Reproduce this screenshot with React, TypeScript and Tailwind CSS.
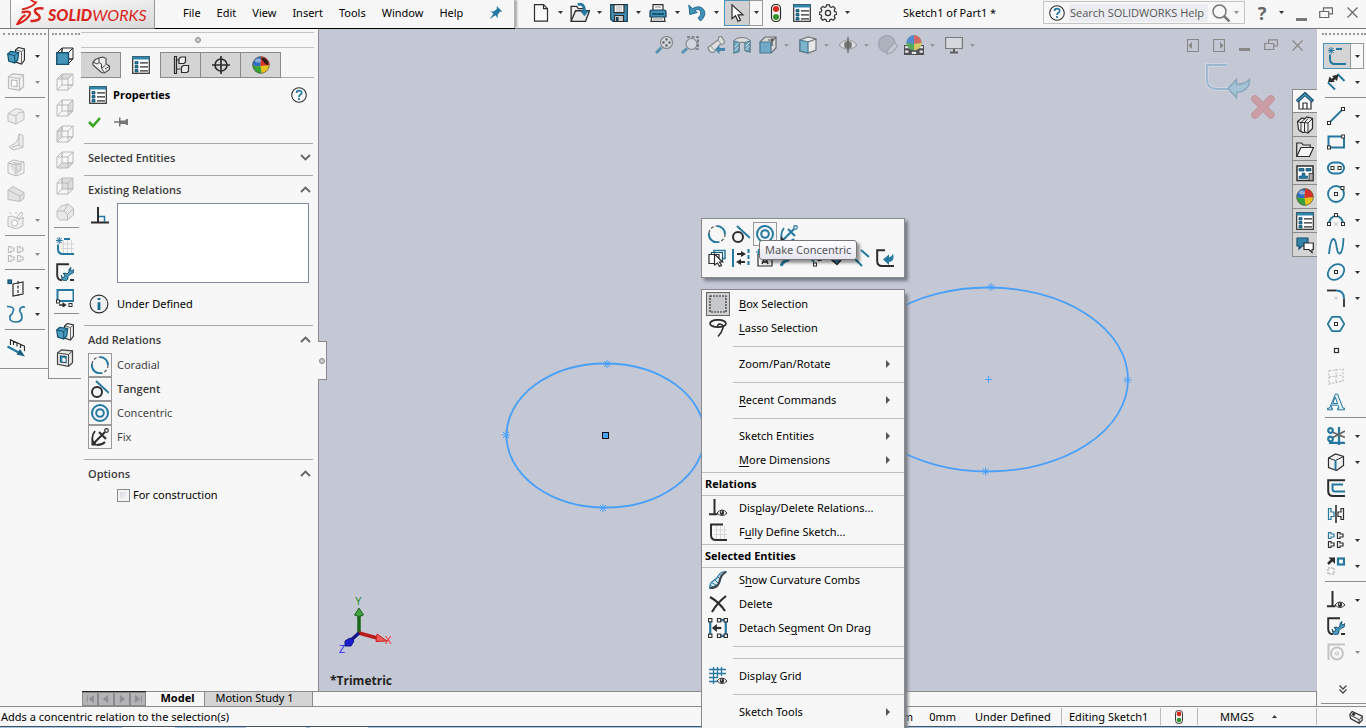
import type { ReactNode } from "react";

const B = "#2578a0";
const K = "#2d2d2d";
const G = "#bdbdbd";

function Ic({ children, cls = "h-[18px] w-[18px]", box = "0 0 18 18" }: { children: ReactNode; cls?: string; box?: string }) {
  return (
    <svg viewBox={box} className={"block shrink-0 " + cls} fill="none" stroke={K} strokeWidth="1.2" aria-hidden="true">
      {children}
    </svg>
  );
}

const Caret = ({ dim = false }: { dim?: boolean }) => (
  <svg viewBox="0 0 5 3" className="h-[3px] w-[5px] shrink-0" aria-hidden="true">
    <path d="M0 0h5L2.5 3z" fill={dim ? "#8c8c8c" : "#333"} />
  </svg>
);

const handle = (x: number, y: number, c = K) => <rect key={`${x}-${y}`} x={x - 1.5} y={y - 1.5} width="3" height="3" fill="#fff" stroke={c} strokeWidth="1" />;

/* ---------- feature icons ---------- */
const Extrude = () => (
  <Ic>
    <path d="M8.5 3l3-2.500 6 1.500v11l-3 4-6-2z" fill="#f2f2f2" />
    <path d="M14.500 4.500v12M14.500 4.500l3-2.500M14.500 4.500L9 3" stroke="#666" strokeWidth="1" />
    <path d="M.7 7l3-2.500 8 1-1 7.500-3 3-6-2z" fill="#4b9cc0" stroke="#15506d" />
    <path d="M.7 7l7 1.500 4-3M7.700 8.500V16" stroke="#15506d" strokeWidth="1" />
  </Ic>
);
const CutDim = ({ blue = false }: { blue?: boolean }) => (
  <Ic>
    <g stroke={blue ? "#444" : G}>
      <path d="M1.500 4l4-3.200 11 1v12l-4 3.500-11-2z" fill={blue ? "#e6e6e6" : "#f0f0f0"} />
      <path d="M1.500 4l11 1.500V17M12.500 5.500l4-3.500" strokeWidth="1" />
      <path d="M4.500 7l5.500.6v6L4.500 13z" fill={blue ? "#4b9cc0" : "#fff"} stroke={blue ? "#15506d" : G} />
      {blue && <path d="M6.500 9l3 .4v3.600l-3-.4z" fill="#fff" stroke="none" />}
    </g>
  </Ic>
);
const FilletDim = () => (
  <Ic>
    <g stroke={G} strokeWidth="1">
      <path d="M1 6.500l7-4.500q8-1 9 4v6.500L9 17l-8-3z" fill="#ededed" />
      <path d="M1 6.500l8 2.500q1-4 8-4M9 9v8" />
    </g>
  </Ic>
);
const RibDim = () => (
  <Ic>
    <g stroke={G} strokeWidth="1">
      <path d="M12 1l4 1.500v12L7 17l-5-3 3-2q6-2 7-11z" fill="#ededed" />
      <path d="M12 1v11l-7 2M12 12l4 2" />
    </g>
  </Ic>
);
const ShellDim = () => (
  <Ic>
    <g stroke={G} strokeWidth="1">
      <path d="M1 4l5-3 11 2v11l-8 3-8-3z" fill="#f2f2f2" />
      <path d="M1 4l8 2v11M9 6l8-3M6 3.500l8 1.500v6l-4 3" fill="#dedede" />
    </g>
  </Ic>
);
const DraftDim = () => (
  <Ic>
    <g stroke={G} strokeWidth="1">
      <path d="M1 5l5-3.500 11 6v6l-4 3-12-2z" fill="#e2e2e2" />
      <path d="M1 5l12 6v5.500M13 11l4-3.500" />
    </g>
  </Ic>
);
const WizardDim = () => (
  <Ic>
    <g stroke={G} strokeWidth="1">
      <path d="M1 6l4-1 8 3 3-1v8l-7 3-8-3z" fill="#ededed" />
      <circle cx="7.500" cy="12" r="3" fill="#fff" />
      <path d="M9 8l5-7 2 1.500-5 7M2 1l2 2M9 1v2M15 6l2 1" />
    </g>
  </Ic>
);
const Pattern = ({ dim = false }: { dim?: boolean }) => {
  const c = dim ? G : K;
  return (
    <Ic>
      <path d="M1.500 1.500v6H4V6h3V3H4V1.500z" stroke={dim ? G : B} />
      <path d="M10.500 1.500v6H13V6h3V3h-3V1.500z" stroke={c} />
      <path d="M1.500 10.500v6H4V15h3v-3H4v-1.500z" stroke={c} />
      <path d="M10.500 10.500v6H13V15h3v-3h-3v-1.500z" stroke={c} />
    </Ic>
  );
};
const RefPlane = () => (
  <Ic>
    <rect x="1" y="1" width="3.500" height="3.500" fill={B} stroke="#15506d" />
    <path d="M6 5l10-2v12L6 17z" />
    <path d="M11 2v15" strokeDasharray="3 1.500" />
  </Ic>
);
const CurveIc = () => (
  <Ic>
    <path d="M0 1.500q7 0 6.500 3.500T3 11q-1 6 5.500 6T15 12q0-3-2-5.500-1-5 5-4.500" stroke={B} strokeWidth="1.700" />
  </Ic>
);
const Instant3D = () => (
  <Ic>
    <path d="M3.500 6V.8l14 6.500v5M6.500 2.500v3.500M10 4v3.500M13.500 6v3" />
    <path d="M.5 7.500l13 7" stroke={B} strokeWidth="2.200" />
    <path d="M9.500 15.500l3.500-5.500 5 7.500z" fill="#1c5f80" stroke="none" />
  </Ic>
);

/* ---------- view cubes ---------- */
const Cube = ({ face }: { face: string }) => {
  const first = face === "front";
  const c = first ? K : "#b9b9b9";
  const faces: Record<string, string> = {
    front: "M1 6h11v11H1z",
    top: "M1 6l5-5h11l-5 5z",
    right: "M12 6l5-5v11l-5 5z",
    left: "M1 6l5-5v11l-5 5z",
    bottom: "M1 17l5-5h11l-5 5z",
    back: "M6 1h11v11H6z",
  };
  return (
    <Ic>
      <path d={faces[face]} fill={first ? "#4b9cc0" : "#dcdcdc"} stroke="none" />
      <path d="M1 6h11v11H1zM1 6l5-5h11l-5 5M17 1v11l-5 5M6 1v5M12 12h5M6 1v11h11M1 17l5-5" stroke={c} strokeWidth="1" />
      {first && <path d="M.8 5.800h11.700v11.700H.8z" fill="#4696bc" stroke="#15506d" strokeWidth="1.400" />}
    </Ic>
  );
};
const IsoDim = () => (
  <Ic>
    <g stroke={G} strokeWidth="1">
      <path d="M1 8l4-5 7-2 5.500 4.500V12l-6 5H4l-3-3z" fill="#e9e9e9" />
      <path d="M1 8h7l3.500 3.500V17M8 8l4-7M11.500 11.500l6-6" />
    </g>
  </Ic>
);

/* ---------- sketch icons ---------- */
const SketchIc = ({ dark = false, star = true }: { dark?: boolean; star?: boolean }) => (
  <Ic>
    <path d="M5 7h13M5 11.500h13M7.500 3v13M11.500 3v13M15.500 3v13" stroke="#d6d6d6" strokeWidth="1" />
    <path d={star ? "M8 2h6M2 7.500V12q0 5 5 5h11" : "M14 1.500H2V12q0 5 5 5h11"} stroke={dark ? K : B} strokeWidth="2" />
    {star && <path d="M3.200 0v7M0 3.500h6.500M.8 1l4.800 5M5.600 1L.8 6" stroke={B} strokeWidth="1" />}
  </Ic>
);
const Repair = () => (
  <Ic>
    <path d="M13 1.200H1.200V12q0 5 5 5.300M14 17h4" stroke={K} strokeWidth="1.900" />
    <path d="M5 12.500l1.500 2 2-.5.500-2-2-1.500q2.500-1 4 .5l2-2q-1-3 2-4.500l-.5 2.500 1.500 1 2-1.500q.5 4-3.500 4.500l-2.500 2.500q.5 3.500-2.500 4.500-4 0-4-5.500z" fill="#4b9cc0" stroke="#15506d" strokeWidth="1" />
  </Ic>
);
const Convert = () => (
  <Ic>
    <rect x="1.500" y="1" width="16" height="11" stroke={B} strokeWidth="2" />
    {handle(2, 12.5)}
    <path d="M3 16h6" strokeWidth="1.500" />
    <path d="M6.500 13l4 3-4 3z" fill={K} stroke="none" />
    {handle(14.5, 16)}
  </Ic>
);
const Dim = () => (
  <Ic>
    <path d="M10.500 1l7 7M1 9.500l7 7" stroke={B} strokeWidth="2" />
    <path d="M3.500 8.500L9 4" strokeWidth="2.500" />
    <path d="M1 9l1.500-5.500L8 9zM11.500 1.500L5 3l5 5z" fill={K} stroke="none" />
  </Ic>
);
const LineIc = () => <Ic><path d="M2 16L16 2" stroke={B} strokeWidth="1.800" />{handle(2, 16)}{handle(16, 2)}</Ic>;
const RectIc = () => <Ic><path d="M1.500 3.500h15.500v11H1.500z" stroke={B} strokeWidth="2" />{handle(2, 14.5)}{handle(16.2, 3.5)}</Ic>;
const SlotIc = () => <Ic><rect x="1" y="3.500" width="16" height="11" rx="5.500" stroke={B} strokeWidth="2" />{handle(5.5, 9)}{handle(12.5, 9)}</Ic>;
const CircleIc = () => <Ic><circle cx="9" cy="9" r="8" stroke={B} strokeWidth="1.800" />{handle(9, 9)}{handle(15.5, 3)}</Ic>;
const ArcIc = () => (
  <Ic>
    <path d="M2 13a7 8 0 0 1 14 0" stroke={B} strokeWidth="2" />
    <path d="M7 11l4 4M11 11l-4 4" stroke="#c5c5c5" strokeWidth="1" />
    {handle(2, 13)}{handle(9, 4)}{handle(16, 13)}
  </Ic>
);
const SplineIc = () => <Ic><path d="M2 17Q3.500 2 6.500 2q2 0 3 7.500T13 16.500Q16 15 16.500 1" stroke={B} strokeWidth="1.800" /></Ic>;
const EllipseIc = () => <Ic><ellipse cx="9" cy="9" rx="9" ry="7" transform="rotate(-42 9 9)" stroke={B} strokeWidth="1.800" />{handle(9, 9)}</Ic>;
const FilletIc = () => (
  <Ic>
    <path d="M0 1.500h9" strokeWidth="1.800" /><path d="M9 1.500q8 0 8 8" stroke={B} strokeWidth="1.800" /><path d="M17 9.500V18" strokeWidth="1.800" />
    <path d="M7.500 7.500l3 3M10.500 7.500l-3 3" stroke="#c5c5c5" strokeWidth="1" />
  </Ic>
);
const PolyIc = () => <Ic><path d="M5 1.800h8l4.300 7.200L13 16.200H5L.7 9z" stroke={B} strokeWidth="1.800" />{handle(9, 9)}</Ic>;
const PointIc = () => <Ic><rect x="7.500" y="7.500" width="4" height="4" fill="#fff" /></Ic>;
const PlaneDim = () => <Ic><path d="M2 4l14-2v12L2 17zM2 10l14-2M9 2v14" stroke={G} strokeDasharray="2 1.500" /></Ic>;
const TextIc = () => (
  <Ic>
    <path d="M0.500 16.800h5v-1.600h-1.500l1-3h6l1 3h-1.500v1.600h7v-1.600h-1.500L10.500 1h-2L2.500 15.200h-2zM5.800 10.500h4.800L8.200 4z" stroke={B} strokeWidth="1" fill="#e5f0f5" fillRule="evenodd" />
  </Ic>
);
const TrimIc = () => (
  <Ic>
    <path d="M12 0v18M2 15.800h16" stroke={B} strokeWidth="2.200" />
    <path d="M5 5l13 5.500M5 11l13-7" stroke="#666" strokeWidth="1.800" />
    <circle cx="3.500" cy="3.500" r="2.300" stroke={B} strokeWidth="2.200" /><circle cx="3.500" cy="12" r="2.300" stroke={B} strokeWidth="2.200" />
  </Ic>
);
const ConvertCube = () => (
  <Ic>
    <path d="M1.500 5l7-4 8 2.500v9l-7 5-8-3z" fill="#f0f0f0" />
    <path d="M1.500 5l7 2.500 8-4" strokeWidth="1" />
    <path d="M8.500 7.500V17" stroke={B} strokeWidth="2" />
  </Ic>
);
const OffsetIc = () => <Ic><path d="M18 1.200H1.200V12q0 5 5 5H18" strokeWidth="2" /><path d="M16 5.500H5.500v4.500q0 2.500 2.500 2.500h10" stroke={B} strokeWidth="2" /></Ic>;
const MirrorIc = () => <Ic><path d="M9 0v18" strokeWidth="1.600" /><path d="M1.500 3.500v11H4v-3h3V7H4V3.500z" stroke={B} /><path d="M16.500 3.500v11H14v-3h-3V7h3V3.500z" /></Ic>;
const MoveIc = () => (
  <Ic>
    <path d="M1 7l5-5" strokeWidth="2.500" /><path d="M1.500.5H8V7z" fill={K} stroke="none" />
    <rect x="11" y="1.500" width="6" height="6" stroke={B} strokeWidth="2.200" />
    <rect x="1" y="11" width="6" height="6" stroke={G} strokeDasharray="2 1" strokeWidth="1.500" />
  </Ic>
);
const Eye = ({ x, y }: { x: number; y: number }) => (
  <g transform={`translate(${x} ${y})`}>
    <path d="M0 4q5-6 10 0-5 5-10 0z" fill="#fff" stroke={K} strokeWidth="1" />
    <circle cx="5" cy="3.800" r="2.200" fill={K} stroke="none" /><circle cx="4.500" cy="3" r=".7" fill="#fff" stroke="none" />
  </g>
);
const RelEye = () => <Ic><path d="M5.500 0v15M0 15.200h8.500" strokeWidth="2" /><Eye x={8} y={10} /></Ic>;
const QuickDim = () => <Ic><path d="M1.500 17V1.500H18" stroke="#c4c4c4" strokeWidth="2" /><circle cx="10" cy="10.500" r="6" stroke="#c4c4c4" strokeWidth="1.800" /><circle cx="10" cy="10.500" r="1.500" stroke="#c4c4c4" /></Ic>;

/* ---------- relation icons ---------- */
const Coradial = () => (
  <Ic>
    <path d="M9 1a8 8 0 0 1 8 8M11 17A8 8 0 0 1 1 8" stroke={B} strokeWidth="2" />
    <path d="M17 9a8 8 0 0 1-6 8M1 8a8 8 0 0 1 8-7" stroke="#555" strokeDasharray="3 2" strokeWidth="1.200" />
  </Ic>
);
const Tangent = () => <Ic><circle cx="6" cy="12" r="5" strokeWidth="2" /><path d="M5 1l13 12" stroke={B} strokeWidth="2" /></Ic>;
const Concentric = () => <Ic><circle cx="9" cy="9" r="8" stroke={B} strokeWidth="2" /><circle cx="9" cy="9" r="3.800" stroke={B} strokeWidth="2" /></Ic>;
const Fix = ({ blue = false }: { blue?: boolean }) => (
  <Ic>
    <path d="M3 15L14 4M8 4l7 7" strokeWidth="2" stroke={blue ? B : K} />
    <circle cx="15.500" cy="2.500" r="1.800" stroke={blue ? B : K} />
    <path d="M4 3Q0 8 2 14M6 17q5 0 8-3" strokeWidth="1.800" stroke={blue ? B : K} />
    <path d="M0.500 17.500V11l6.500 6.500z" fill={K} stroke="none" />
  </Ic>
);
const Perp = () => <Ic><path d="M0 16.500h18M7 1v15" strokeWidth="2" /><path d="M8 10.500h5.500V16" stroke={B} strokeWidth="1.500" /></Ic>;

/* ---------- shared small graphics ---------- */
const PropsIc = () => (
  <Ic>
    <rect x=".7" y=".7" width="16.600" height="16.600" fill="#fff" />
    <path d="M.5 2h17" stroke="#2e86ad" strokeWidth="3" />
    <path d="M3 5.500h3v2.500H3zM3 9.500h3V12H3zM3 13.500h3V16H3z" fill={B} stroke="#15506d" strokeWidth=".8" />
    <path d="M8 6.800h8M8 10.800h8M8 14.800h8" strokeWidth="1.300" />
  </Ic>
);
const Ball = ({ spot = false }: { spot?: boolean }) => (
  <Ic>
    <g stroke="none">
      <circle cx="9" cy="9" r="8.500" fill="#e8c21c" />
      <path d="M9 .5A8.500 8.500 0 0 0 .5 9q4 2 8 1z" fill="#2d6fc4" />
      <path d="M9 .5A8.500 8.500 0 0 1 17.500 9l-9 1z" fill="#d6342b" />
      <path d="M.5 9q4 2 8 1l1 7.500A8.500 8.500 0 0 1 .5 9z" fill="#35a23a" />
      <ellipse cx="6" cy="4.500" rx="3" ry="2" fill="#fff" opacity=".45" />
      {spot && <path d="M9 2.500q3-1.500 6 1.500 2 3 .5 5.500Q12 7 9 2.500z" fill="#2a1a1a" />}
    </g>
    <circle cx="9" cy="9" r="8.300" stroke="#555" strokeWidth=".7" />
  </Ic>
);
const Help = () => (
  <Ic cls="h-[16px] w-[16px]">
    <circle cx="9" cy="9" r="8.200" fill="#fafafa" />
    <path d="M6.200 6.800q0-2.800 2.900-2.800t2.900 2.500q0 1.500-1.500 2.300T9 11.200" stroke={B} strokeWidth="2" />
    <path d="M8 12.500h2v2H8z" fill={B} stroke="none" />
  </Ic>
);
const Traffic = ({ cls }: { cls?: string }) => (
  <Ic cls={cls}>
    <rect x="4.500" y=".5" width="9" height="17" rx="4" fill="#f4f4f4" />
    <circle cx="9" cy="5" r="3" fill="#d42a1c" stroke="none" /><circle cx="9" cy="13" r="3" fill="#37912d" stroke="none" />
  </Ic>
);
const Restore = ({ c = "#666" }: { c?: string }) => <Ic cls="h-[12px] w-[14px]" box="0 0 14 12"><path d="M4.500 4V.8h9v6H10M.7 4.500h9v6h-9z" stroke={c} /></Ic>;
const Cross = ({ c = "#666" }: { c?: string }) => <Ic cls="h-[11px] w-[11px]" box="0 0 11 11"><path d="M.5.5l10 10M10.500.5l-10 10" stroke={c} /></Ic>;
const Mini = ({ c = "#777" }: { c?: string }) => <Ic cls="h-[12px] w-[11px]" box="0 0 11 12"><path d="M0 10.500h11" stroke={c} strokeWidth="3" /></Ic>;

function Tool({ icon, name, arrow, dim, active }: { icon: ReactNode; name: string; arrow?: boolean; dim?: boolean; active?: boolean }) {
  return (
    <div className="flex h-[26px] items-center">
      <button aria-label={name} className={active ? "-ml-[4px] flex h-[26px] w-[28px] items-center justify-center border border-[#4a94ba] bg-[#d4d4d4]" : "flex h-[26px] w-[18px] items-center justify-center"}>{icon}</button>
      {arrow && (
        <button aria-label={name + " options"} className={active ? "-ml-px flex h-[26px] w-[14px] items-center justify-center border border-[#999]" : "ml-[6px] flex h-[26px] w-[12px] items-center justify-center"}>
          <Caret dim={dim} />
        </button>
      )}
    </div>
  );
}
const ToolSep = ({ cls = "mx-0" }: { cls?: string }) => <div className={"h-[8px] pt-[2px] " + cls}><div className="h-px bg-[#8d8d8d]" /></div>;
const Grip = () => <div className="flex h-[14px] pt-[4px]"><div className="h-[3px] flex-1 border-t-2 border-dotted border-[#999]" /></div>;

/* ---------- header ---------- */
const fileTools: [string, ReactNode][] = [
  ["New", <Ic><path d="M2.500.7h9l4 4v12.500h-13z" fill="#fafafa" /><path d="M11.500.7v4h4" /></Ic>],
  ["Open", <Ic cls="h-[20px] w-[20px]"><path d="M1 16V3h5l1.500 2H13v2" fill="#eee" /><path d="M1 16.500L5 7h12.500L14 16.500z" fill="#e9e9e9" /><path d="M7 1.500q6-2 6 6" stroke={B} strokeWidth="2.500" /><path d="M9 7h8l-4 5z" fill={B} stroke="none" /></Ic>],
  ["Save", <Ic><path d="M.7.7h16.600v16.600H3l-2.300-2z" fill="#4190b5" stroke="#163f55" /><path d="M4 .7h10v8H4z" fill="#fff" /><path d="M6 3h6M6 5h6M6 7h6" stroke="#999" strokeWidth=".8" /><path d="M4.500 11.500h9v6h-9z" fill="#ccc" /><path d="M6 13h2.500v4H6z" fill="#163f55" stroke="none" /></Ic>],
  ["Print", <Ic><path d="M4 7V.7h10V7M3 12h12l1 5.300H2z" fill="#fff" /><path d="M1 8q0-2 2-2h12q2 0 2 2v5H1z" fill="#4190b5" stroke="#163f55" /><path d="M3 10h12" stroke="#15506d" strokeWidth="1.800" /><path d="M6 3h6M4 15h10" stroke="#888" /></Ic>],
  ["Undo", <Ic><path d="M.8 1l1 9.500 7.500-2-2.700-1.800Q11 4 12.500 7.500T10 14l2.500 3Q18 12 16.500 7 13 0 4.500 4.500z" fill="#3f91b8" stroke="#1d6484" strokeWidth=".9" /></Ic>],
];

function Header() {
  return (
    <header className="flex h-[29px] shrink-0 border-b border-[#77777a] bg-[#f7f7f7]">
      <div className="ml-[10px] flex w-[145px] shrink-0 items-start border-x border-[#999] bg-linear-to-br from-white to-[#d9d9d9]">
        <svg viewBox="0 0 28 25" className="ml-[5px] h-[25px] w-[28px]" fill="none" stroke="#d9261c" aria-hidden="true">
          <path d="M14-1q3 3 6 3.500Q17 7 6 9.500" strokeWidth="1.900" />
          <path d="M5.500 12.500q9-2.500 8.500 1.500Q12 20 1.500 24q3.500-7 8-9" strokeWidth="2.300" />
          <path d="M27.500 8.500q-9-1-8.500 2.500 0 2 3.500 4 3 3.500-1 5t-7 .7" strokeWidth="2.500" />
        </svg>
        <div className="ml-[4px] mt-[6px] font-[Lato] text-[16px] leading-[18px] text-[#d9261c] italic"><b className="font-black">SOLID</b>WORKS</div>
      </div>
      <nav className="flex w-[360px] shrink-0 items-center gap-4 border-r border-r-[#b5b5b5] pb-[2px] pl-[28px] shadow-[0_1px_0_#000,2px_0_2px_#aaa]">
        {["File", "Edit", "View", "Insert", "Tools", "Window", "Help"].map((m) => <button key={m} className="whitespace-nowrap">{m}</button>)}
        <button aria-label="Keep menu visible" className="ml-[10px]">
          <Ic cls="h-[14px] w-[14px]"><path d="M10 0l7 7-3 .5-3 4 .5 4L8 12l-7 5 4.500-7L2 6.500l4 .5 4-3z" fill={B} stroke="none" /></Ic>
        </button>
      </nav>
      <div className="flex items-center pb-[3px] pl-[16px]">
        {fileTools.map(([n, i]) => (
          <div key={n} className="flex w-[39px] items-center gap-[7px]">
            <button aria-label={n} className="flex w-[20px] justify-center">{i}</button>
            <button aria-label={n + " options"} className="flex h-[20px] w-[5px] items-center"><Caret /></button>
          </div>
        ))}
        <button aria-label="Select" className="-ml-[2px] flex h-[26px] w-[26px] items-center justify-center border border-[#4a94ba] bg-[#d0d0d0]">
          <Ic><path d="M4 .8v14l3.500-3 2.500 5.500 2.500-1-2.500-5.500h5z" fill="#fff" /></Ic>
        </button>
        <button aria-label="Select options" className="-ml-px flex h-[26px] w-[14px] items-center justify-center border border-[#999]"><Caret /></button>
        <div className="ml-[4px] flex items-center gap-[8px]">
          <button aria-label="Rebuild"><Traffic /></button>
          <button aria-label="File properties"><PropsIc /></button>
          <button aria-label="Options">
            <Ic><path d="M7.600.8h2.800l.5 2 1.500.6 1.800-1 2 2-1 1.800.6 1.500 2 .5v2l-2 .7-.6 1.500 1 1.800-2 2-1.800-1-1.500.6-.5 2H7.600l-.5-2-1.500-.6-1.800 1-2-2 1-1.800-.6-1.500-2-.5v-2l2-.7.6-1.500-1-1.800 2-2 1.800 1 1.500-.6z" fill="#f4f4f4" /><circle cx="9" cy="9" r="2.600" /></Ic>
          </button>
          <Caret />
        </div>
      </div>
      <div className="flex-1 pl-[53px] pt-[4px] leading-[18px] whitespace-nowrap">Sketch1 of Part1 *</div>
      <div className="mt-px flex h-[23px] w-[202px] shrink-0 items-center gap-[4px] border border-[#c4c4c4] px-[5px]">
        <Help />
        <input aria-label="Search SOLIDWORKS Help" placeholder="Search SOLIDWORKS Help" className="h-[18px] w-[139px] bg-[#ebecf0] pl-[1px] font-['Open_Sans',sans-serif] text-[11px] text-[#444] outline-none placeholder:text-[#555]" />
        <button aria-label="Search"><Ic><circle cx="7.500" cy="7.500" r="6.500" stroke="#777" strokeWidth="1.500" /><path d="M12 12l5.500 5.500" stroke="#777" strokeWidth="2.500" /></Ic></button>
        <Caret dim />
      </div>
      <div className="flex w-[121px] shrink-0 items-center pb-[3px] pl-[12px]">
        <button aria-label="Help" className="w-[10px] text-[18px] leading-[20px] font-bold text-[#666]">?</button>
        <div className="ml-[12px]"><Caret /></div>
        <button aria-label="Minimize" className="ml-[12px] pt-[4px]"><Mini /></button>
        <button aria-label="Restore" className="ml-[12px]"><Restore /></button>
        <button aria-label="Close" className="ml-[14px]"><Cross /></button>
      </div>
    </header>
  );
}

/* ---------- property panel ---------- */
const Chevron = ({ up = false }: { up?: boolean }) => <Ic cls="h-[7px] w-[11px]" box="0 0 11 7"><path d={up ? "M1 6l4.500-4.500L10 6" : "M1 1l4.500 4.500L10 1"} stroke="#666" strokeWidth="1.900" /></Ic>;
const Section = ({ title, up, children }: { title: string; up?: boolean; children?: ReactNode }) => (
  <section className="mr-[5px] ml-[3px] border-t border-[#a9a9a9]">
    <button className="flex h-[27px] w-full items-center justify-between pr-[2px] pl-[4px] font-['Open_Sans',sans-serif] font-semibold text-[#3a3a3a]">{title}<Chevron up={up} /></button>
    {children}
  </section>
);
const relations: [string, ReactNode, boolean][] = [["Coradial", <Coradial />, false], ["Tangent", <Tangent />, true], ["Concentric", <Concentric />, false], ["Fix", <Fix />, false]];
const panelTabs: [string, ReactNode][] = [
  ["Feature tree", <Ic><path d="M1 6l3-3 3-.5V2l4-1 3 1.500V8l3.500 2v3.500L12.500 17l-3-.5L1 9z" fill="#eee" stroke="#444" strokeWidth="1.100" /><path d="M1 6l4 2 2-1.500V3M7 6.500L9.500 8v4.500l3 4M9.500 12.500l4-3.500M13 13l4-2.500" stroke="#444" strokeWidth="1" /></Ic>],
  ["Property manager", <PropsIc />],
  ["Configurations", <Ic><path d="M2.500.5v17h2V.5zM4.500 4h3M4.500 13h4" strokeWidth="1.200" /><path d="M7 2.500L9 1h4.500v5L12 7.500H7zM9.500 11l2-1.500h5V15L15 16.500H9.500z" fill="#eee" /></Ic>],
  ["DimXpert", <Ic><circle cx="9" cy="9" r="6" strokeWidth="1.700" /><path d="M9 0v18M0 9h18" strokeWidth="1.700" /></Ic>],
  ["Display manager", <Ball spot />],
];

function Panel() {
  return (
    <aside className="relative w-[238px] shrink-0 border-r border-[#8a8a8a] bg-[#f7f7f7]">
      <div className="mt-[3px] mr-[4px] flex h-[16px] items-center justify-center border-y border-[#c4c4c4]"><span className="h-[6px] w-[6px] rounded-full border border-[#888] bg-[#ccc]" /></div>
      <div className="mt-[4px] mr-[4px] flex h-[26px]">
        {panelTabs.map(([n, i], k) => (
          <button key={n} aria-label={n} className={k === 1 ? "flex w-[40px] items-center justify-center border-r border-[#8a8a8a]" : "flex w-[40px] items-center justify-center border-y border-r border-[#8a8a8a] bg-[#d4d4d4]"}>{i}</button>
        ))}
        <div className="flex-1 border-b border-[#b0b0b0]" />
      </div>
      <div className="flex h-[34px] items-center pr-[11px] pl-[8px]">
        <PropsIc />
        <h2 className="ml-[6px] flex-1 font-['Open_Sans',sans-serif] font-bold">Properties</h2>
        <button aria-label="Help"><Help /></button>
      </div>
      <div className="flex h-[31px] items-start gap-[13px] pt-[4px] pl-[7px]">
        <button aria-label="OK"><Ic cls="h-[12px] w-[13px]" box="0 0 13 12"><path d="M1 6l4 4 7-8" stroke="#3aa61f" strokeWidth="2.600" /></Ic></button>
        <button aria-label="Keep visible"><Ic cls="h-[12px] w-[14px]" box="0 0 14 12"><path d="M0 6h6" stroke="#777" strokeWidth="1.500" /><path d="M5 1.500h1.500v3H11l1.500-1.500H14v6h-1.500L11 8H6.500v2.500H5z" fill="#777" stroke="none" /></Ic></button>
      </div>
      <Section title="Selected Entities"><div className="h-[4px]" /></Section>
      <Section title="Existing Relations" up>
        <div className="flex pr-[4px] pl-[7px]">
          <div className="pt-[3px]"><Perp /></div>
          <div role="listbox" aria-label="Existing relations" className="ml-[8px] h-[80px] flex-1 border border-[#7f88a4] bg-white" />
        </div>
        <div className="flex h-[42px] items-center gap-[8px] pl-[5px]">
          <Ic cls="h-[20px] w-[20px]"><circle cx="9" cy="9" r="8" fill="#f0f0f0" strokeWidth="1" /><path d="M9 7.500v7M9 3.500v2" stroke="#1c6c92" strokeWidth="2.500" /></Ic>
          Under Defined
        </div>
      </Section>
      <Section title="Add Relations" up>
        <div className="pb-[10px] pl-[4px]">
          {relations.map(([n, i, b]) => (
            <button key={n} className={b ? "flex h-[24px] items-center gap-[5px] font-['Open_Sans',sans-serif] font-semibold text-[#3a3a3a]" : "flex h-[24px] items-center gap-[5px] text-[#444]"}>
              <span className="flex h-[24px] w-[24px] items-center justify-center border border-[#999]">{i}</span>{n}
            </button>
          ))}
        </div>
      </Section>
      <Section title="Options" up>
        <label className="flex h-[16px] items-center gap-[3px] pl-[33px]">
          <input type="checkbox" className="h-[13px] w-[13px] appearance-none border border-[#8a8a8a] bg-linear-to-br from-[#cfd2da] to-white shadow-[inset_0_0_0_2px_#f4f4f4]" />For construction
        </label>
      </Section>
      <button aria-label="Collapse panel" className="absolute top-[312px] -right-[9px] z-10 flex h-[39px] w-[9px] items-center justify-center border border-l-0 border-[#8a8a8a] bg-[#f7f7f7]">
        <span className="h-[6px] w-[6px] shrink-0 rounded-full border border-[#888] bg-[#ccc]" />
      </button>
    </aside>
  );
}

/* ---------- graphics area ---------- */
const lens = (x: number, y: number, r: number) => (<><path d={`M${x - r + 1} ${y + r - 1}L1 17`} stroke="#3c87ab" strokeWidth="3" /><circle cx={x} cy={y} r={r} fill="#d5dbe0" stroke="#777" /></>);
const headsUp: [string, ReactNode, boolean][] = [
  ["Zoom to fit", <Ic>{lens(11.5, 6.5, 6)}<path d="M11.500 2.500v2M11.500 8.500v2M7.500 6.500h2M13.500 6.500h2" strokeWidth="2" /></Ic>, false],
  ["Zoom to area", <Ic><path d="M6 1h11v12h-4" strokeDasharray="3 1.500" />{lens(10.5, 8, 5.5)}</Ic>, false],
  ["Previous view", <Ic><path d="M1 11.500L11 4l1-3 2-1 4 6-2 2-3 .5-6 7.500q-4 2-6-4z" fill="#e4e4e4" stroke="#777" /><path d="M11 4l3 4M4 10l3.500 4.500" stroke="#888" strokeWidth="1" /><path d="M8 13.500l4.500-4.500v3H18v3h-5.500v3z" fill={B} stroke="none" /></Ic>, false],
  ["Section view", <Ic><path d="M1 4.500q2-3 8-3t8 3V16l-5-1.500V7q-3-2-6 0v8.500L1 17z" fill="#e0e0e0" stroke="#666" strokeWidth="1" /><path d="M1 5l5 1.500v9L1 17zM12 6.500L17 5v11l-5-1.500z" fill="#5a9fbe" stroke="#3c6f86" /><path d="M1.500 11L5.500 7M1.500 15l4-4M12.500 10.500l4-4M12.500 14l4-4" stroke="#e8f3f8" strokeWidth=".9" /></Ic>, false],
  ["View orientation", <Ic><path d="M1 6l5-5h11v11l-5 5M17 1l-5 5" fill="#ddd" stroke="#555" /><path d="M1 6h11v11H1z" fill="#5ba3c4" stroke="#2f667f" /><path d="M9 4h6M13 2v8" /></Ic>, true],
  ["Display style", <Ic><path d="M1 4l8-3 8 2v11l-8 3-8-2z" fill="#f0f0f0" stroke="#666" /><path d="M1 4l8 2v11l-8-2z" fill="#6aaeca" stroke="#2f667f" /><path d="M9 6l8-3" stroke="#555" /></Ic>, true],
  ["Hide/show items", <Ic><path d="M0 9q9-10 18 0-9 9-18 0z" fill="#e8e8e8" stroke="#999" /><circle cx="9" cy="9" r="4" fill="#666" stroke="none" /><path d="M9 1v16" stroke="#444" /></Ic>, true],
  ["Edit appearance", <Ic cls="h-[20px] w-[20px]"><circle cx="8" cy="8" r="7.500" fill="#a9adb8" stroke="#999fac" /><path d="M9 13l6-6 3 3-6 6-4 1z" fill="#c8cad2" stroke="#999fac" /></Ic>, false],
  ["Apply scene", <Ic cls="h-[20px] w-[20px]"><path d="M0 9h18v9H0z" fill="#333" stroke="none" /><path d="M1 11h4M13 11h4M1 15h3M7 16h4M14 15h3" stroke="#eee" strokeWidth="2" /><g stroke="none"><circle cx="9" cy="7" r="6.800" fill="#3aa43f" /><path d="M9 .2A6.800 6.800 0 0 0 2.200 7L9 8z" fill="#3a7bd0" /><path d="M9 .2A6.800 6.800 0 0 1 15.800 7L9 8z" fill="#d8504a" /><path d="M9 8l6.800-1A6.800 6.800 0 0 1 9 13.800z" fill="#d9c84a" /></g></Ic>, true],
  ["View settings", <Ic><path d="M.6 1.500h16.800v11H.6z" fill="#d9dbde" stroke="#666" /><path d="M9 13v3M5 16.500h8" stroke="#444" strokeWidth="2" /></Ic>, true],
];
const star = (x: number, y: number) => <path key={`${x}-${y}`} d={`M${x} ${y - 4}v8M${x - 4} ${y}h8M${x - 3} ${y - 3}l6 6M${x + 3} ${y - 3}l-6 6`} stroke="#4aa0f8" strokeWidth="1" />;
const paneTabs: [string, ReactNode][] = [
  ["Home", <Ic><path d="M3 8v9h12V8" fill="#fff" /><path d="M7 17v-6h4v6" /><path d="M1 9.500L9 2l8 7.500" stroke="#15506d" strokeWidth="3.500" /><path d="M1.500 9L9 2.200 16.500 9" stroke="#4b9cc0" strokeWidth="1.200" /></Ic>],
  ["Design library", <Ic><path d="M1.500 5.500L6 2l2.500.8L11 1l5.500 1.500v10L12 17l-3-1-2 .5-3-1.500-1.500-1.500z" fill="#f0f0f0" /><path d="M1.500 5.500L5 6.500V16M5 6.500L8.500 3M8.500 6.500V16M8.500 6.500L12 2.500M12 7v10M12 7l4.500-4.500M5 6.500h3.500L12 7" strokeWidth="1" /></Ic>],
  ["File explorer", <Ic><path d="M.7 16V3h5l1.500 2h7v3" fill="#ddd" /><path d="M.7 16.500L5 7.500h12.500l-4 9z" fill="#f4f4f4" /></Ic>],
  ["View palette", <Ic><path d="M1 2h16v14.500H1z" fill="#fff" strokeWidth="1.500" /><path d="M3 4.500h5V7H3zM10 4.500h5V7h-5z" fill={B} stroke="#15506d" strokeWidth=".8" /><path d="M6 9h3v3h2.500v2.500H3V12h3z" fill={B} stroke="#15506d" strokeWidth=".6" /><path d="M13 9.500h4v7h-4z" fill="#aaa" strokeWidth=".8" /></Ic>],
  ["Appearances", <Ball />],
  ["Custom properties", <PropsIc />],
  ["Forum", <Ic><path d="M1 2h11v8H6l-3 3v-3H1z" fill="#3484aa" stroke="#15506d" /><path d="M8 7h9.300v6.500H16v3l-3-3H8z" fill="#fff" /></Ic>],
];

function Viewport() {
  return (
    <main className="relative flex min-w-0 flex-1 flex-col overflow-hidden bg-[#c4c8d4]">
      <svg viewBox="319 29 998 662" preserveAspectRatio="xMinYMin" className="absolute inset-0 h-full w-full" fill="none" aria-label="Sketch with two ellipses">
        <ellipse cx="605.500" cy="435.500" rx="99" ry="72" stroke="#4aa0f8" strokeWidth="1.800" />
        <ellipse cx="988" cy="379.500" rx="140" ry="92" stroke="#4aa0f8" strokeWidth="1.800" />
        {[[607, 364], [506, 435], [603, 508], [991, 287], [1127.5, 380], [985.5, 471.5]].map(([x, y]) => star(x, y))}
        <path d="M985 379.500h7M988.500 376v7" stroke="#4aa0f8" />
        <rect x="602.500" y="432.500" width="6" height="6" fill="#4aa0f8" stroke="#111" />
        <path d="M1227 65h-20v14q0 10 10 10h12" stroke="#e1e8ef" strokeWidth="4" opacity=".4" />
        <path d="M1227 65h-20v14q0 10 10 10h12" stroke="#9bb9ce" strokeWidth="1.800" />
        <path d="M1228 88.500l8.500-9v5q9-.5 13-5 0 12-13 13v5z" fill="#a4c4d6" stroke="#8aa7bb" strokeWidth="1.500" />
        <path d="M1255 99l16 16M1271 99l-16 16" stroke="#c1979f" strokeWidth="7.500" strokeLinecap="round" />
        <path d="M1255 99l16 16M1271 99l-16 16" stroke="#cb9ea5" strokeWidth="5.500" strokeLinecap="round" />
        <path d="M359 633v-20" stroke="#1c661c" strokeWidth="3.500" /><path d="M354.500 615l4.500-7 4.500 7q-4 3-9 0z" fill="#42a142" stroke="#1c661c" />
        <path d="M359 633l18 5" stroke="#b81b1b" strokeWidth="3.500" /><path d="M377 634l10 7-11 .5z" fill="#f15a5a" stroke="#c22" />
        <path d="M359 633l-9 8" stroke="#16168a" strokeWidth="3.500" /><path d="M345 641l5-3 4 3-3 5h-6z" fill="#1c1cd0" stroke="#16168a" />
        <g fontFamily="Liberation Sans" fontSize="10" stroke="none"><text x="355" y="605" fill="#1b8a1b">Y</text><text x="385" y="644" fill="#f22">X</text><text x="339" y="653" fill="#22f">Z</text></g>
      </svg>
      <div className="relative flex h-[32px] items-center pr-[14px] pl-[336px]">
        {headsUp.map(([n, i, a]) => (
          <div key={n} className={a ? "flex w-[40px] items-center opacity-80" : "flex w-[26px] items-center opacity-80"}>
            <button aria-label={n} className="flex w-[18px] justify-center">{i}</button>
            {a && <span className="ml-[7px]"><Caret dim /></span>}
          </div>
        ))}
        <div className="ml-auto flex items-center gap-[14px]">
          <button aria-label="Previous pane"><Ic cls="h-[13px] w-[12px]" box="0 0 12 13"><path d="M.5.5h11v12H.5z" stroke="#888" /><path d="M5 3v7L1.500 6.500z" fill="#888" stroke="none" /></Ic></button>
          <button aria-label="Next pane"><Ic cls="h-[13px] w-[12px]" box="0 0 12 13"><path d="M.5.5h11v12H.5z" stroke="#888" /><path d="M7 3v7l3.500-3.500z" fill="#888" stroke="none" /></Ic></button>
          <button aria-label="Minimize document"><Mini c="#888" /></button>
          <button aria-label="Restore document"><Restore c="#888" /></button>
          <button aria-label="Close document"><Cross c="#888" /></button>
        </div>
      </div>
      <div className="relative mt-[28px] ml-auto w-[25px] border-t border-l border-[#8a8a8a]">
        {paneTabs.map(([n, i], k) => (
          <button key={n} aria-label={n} className={k === 0 ? "flex h-[23px] w-full items-center justify-center border-b border-[#8a8a8a] bg-[#f7f7f7]" : "flex h-[24px] w-full items-center justify-center border-b border-[#8a8a8a] bg-[#d4d4d4]"}>{i}</button>
        ))}
      </div>
      <div className="relative mt-auto pb-[2px] pl-[11px] font-['Open_Sans',sans-serif] text-[12px] font-bold text-[#222]">*Trimetric</div>
    </main>
  );
}

/* ---------- context menu ---------- */
function Accel({ text }: { text: string }) {
  const i = text.indexOf("_");
  if (i < 0) return <>{text}</>;
  return <>{text.slice(0, i)}<u className="underline-offset-2">{text[i + 1]}</u>{text.slice(i + 2)}</>;
}
const Item = ({ icon, text, sub, boxed }: { icon?: ReactNode; text: string; sub?: boolean; boxed?: boolean }) => (
  <button role="menuitem" className="flex h-[24px] w-full items-center pl-[4px] text-left">
    <span className={boxed ? "flex h-[24px] w-[24px] items-center justify-center border border-[#666] bg-[#d0d0d0]" : "flex h-[24px] w-[24px] items-center justify-center"}>{icon}</span>
    <span className="ml-[9px] flex-1 whitespace-nowrap"><Accel text={text} /></span>
    {sub && <svg viewBox="0 0 4 8" className="mr-[14px] h-[8px] w-[4px]" aria-hidden="true"><path d="M0 0l4 4-4 4z" fill="#555" /></svg>}
  </button>
);
const Sep = () => <div className="ml-[31px] flex h-[12px] items-center"><div className="h-px flex-1 bg-[#c0c0c0]" /></div>;
const MenuHead = ({ children }: { children: ReactNode }) => <div className="flex h-[24px] items-center border-y border-[#c0c0c0] pl-[3px] font-['Open_Sans',sans-serif] font-bold">{children}</div>;

function ContextMenu() {
  return (
    <>
      <div className="absolute top-[218px] left-[701px] z-20 w-[204px] border border-[#8a8a8a] bg-[#f7f7f7] px-[3px] py-[2px] shadow-[3px_3px_3px_#7a7d86]">
        <div className="flex h-[25px] items-center">
          {[<Coradial />, <Tangent />, <Concentric />, <Fix blue />].map((i, k) => (
            <button key={k} aria-label={["Make Coradial", "Make Tangent", "Make Concentric", "Fix"][k]} className={k === 2 ? "flex h-[24px] w-[24px] items-center justify-center border border-[#999]" : "flex h-[24px] w-[24px] items-center justify-center"}>{i}</button>
          ))}
        </div>
        <div className="flex h-[29px] items-start">
          {[
            <Ic><path d="M6 1.500h11v8H6z" fill="#fff" stroke={B} strokeWidth="1.500" /><path d="M3.500 3.500h11v9h-11z" fill="#fff" stroke="#15506d" /><path d="M1 5.500h10v9H1z" fill="#fff" /><path d="M6.500 5v11l3-2 2 3.500 2-1-2-3.500h3z" fill="#fff" /></Ic>,
            <Ic><path d="M1 0v18" stroke={B} strokeWidth="2" /><path d="M16.500 0v18" stroke={B} strokeWidth="2" strokeDasharray="4 2" /><path d="M5 5h5M8 13h5" strokeWidth="2" /><path d="M9 2l5 3-5 3zM9 10l-5 3 5 3z" fill={K} stroke="none" /></Ic>,
            <Ic><path d="M2 5h14v12H2z" /><path d="M6 15l3-7 3 7M7 13h4" strokeWidth="1.500" /><path d="M0 3h5M2.500 0v6" stroke={B} /></Ic>,
            <Ic><path d="M1 17q2-5 7-6l8-8" stroke={B} strokeWidth="3" /></Ic>,
            <Ic><path d="M1 2l9 11" stroke={B} strokeWidth="2" />{handle(11, 15.5)}{handle(15.5, 10)}</Ic>,
            <Ic><path d="M3 10l6 5 7-8" strokeWidth="2" /><path d="M5 8l4 5 5-7" stroke={B} strokeWidth="2" /></Ic>,
            <Ic><path d="M2 9l8 8M9 1l8 7" stroke={B} strokeWidth="2" /></Ic>,
            <Ic><path d="M9 1.200H1.200V12q0 5 5 5H18" strokeWidth="2" /><path d="M7 10.500l6-5v3q3-.5 4-4 2 8-4 8.500v3z" fill={B} stroke="none" /></Ic>,
          ].map((i, k) => (
            <button key={k} aria-label={["Select other", "Move", "Note", "Line", "Point", "Exit", "Trim", "Exit sketch"][k]} className="flex h-[24px] w-[24px] items-center justify-center">{i}</button>
          ))}
        </div>
      </div>
      <div role="tooltip" className="absolute top-[240px] left-[759px] z-30 flex h-[20px] items-center rounded-[3px] border border-[#767676] bg-linear-to-b from-white to-[#e4e5f0] px-[5px] whitespace-nowrap text-[#575757] shadow-[3px_3px_3px_rgba(0,0,0,0.4)]">Make Concentric</div>
      <div role="menu" className="absolute top-[289px] bottom-0 left-[701px] z-20 w-[204px] overflow-hidden border border-b-0 border-[#8a8a8a] bg-[#f7f7f7] pt-[2px] shadow-[3px_5px_3px_#7a7d86]">
        <Item boxed text="_Box Selection" icon={<Ic><rect x="1" y="1" width="16" height="16" fill="#c6c8cc" strokeDasharray="2 1" /></Ic>} />
        <Item text="_Lasso Selection" icon={<Ic><ellipse cx="9" cy="4.500" rx="8" ry="3.700" strokeWidth="1.700" /><path d="M9 8q-1-3 2-3 4 1 3 4-1 4-5 8.500" strokeWidth="1.500" /></Ic>} />
        <Sep />
        <Item text="Zoom/Pan/Rotate" sub />
        <Sep />
        <Item text="_Recent Commands" sub />
        <Sep />
        <Item text="Sketch Entities" sub />
        <Item text="_More Dimensions" sub />
        <MenuHead>Relations</MenuHead>
        <Item text="Dis_play/Delete Relations..." icon={<RelEye />} />
        <Item text="F_ully Define Sketch..." icon={<SketchIc dark star={false} />} />
        <MenuHead>Selected Entities</MenuHead>
        <Item text="S_how Curvature Combs" icon={<Ic><path d="M.7 17.300q0-5 3-7 4-2 6-6 2-4 7.500-3.500Q12 4 11.500 9T.7 17.300z" fill="#d5e8f0" stroke={B} /><path d="M1 14.500l5 2M2.500 11.500l6 3.500M6 9l4 4M8.500 6l3.500 2M10.500 3l2 2" stroke={B} strokeWidth="1" /><path d="M1 17.300q8 0 9.500-7T17 .8" stroke="#444" strokeWidth="2" /></Ic>} />
        <Item text="Delete" icon={<Ic><path d="M1 2q9 5 15 14M17 1Q8 8 3 17" strokeWidth="2.200" /></Ic>} />
        <Item text="Detach Se_gment On Drag" icon={<Ic cls="h-[20px] w-[20px]"><path d="M2 2v14M16 2v14M10 2h6M10 16h6" stroke={B} strokeWidth="2" />{handle(2, 2)}{handle(2, 16)}{handle(10, 2)}{handle(10, 16)}{handle(16, 2)}{handle(16, 16)}<path d="M6 9h6" strokeWidth="2" /><path d="M8 5.500v7L3.500 9z" fill={K} stroke="none" /></Ic>} />
        <Sep />
        <Sep />
        <Item text="Displa_y Grid" icon={<Ic><path d="M0 2.500h17M0 6.500h17M0 10.500h9M0 14.500h8M4.500 0v17M8.500 0v10M12.500 0v9" stroke={B} strokeWidth="1.300" /><Eye x={8} y={10} /></Ic>} />
        <Sep />
        <Item text="Sketch Tools" sub />
      </div>
    </>
  );
}

const navPaths = ["M4 3v8M11 3l-5 4 5 4z", "M9 3L4 7l5 4z", "M5 3l5 4-5 4z", "M11 3v8M4 3l5 4-5 4z"];

export default function App() {
  return (
    <div className="relative flex h-screen flex-col overflow-hidden bg-[#f7f7f7] font-['Noto_Sans','Open_Sans',sans-serif] text-[11px] leading-[16px] text-black">
      <Header />
      <div className="flex min-h-0 flex-1">
        <div className="flex w-[81px] shrink-0 items-start">
          <div className="w-[48px] border-b border-[#8d8d8d] pb-[7px]">
            <div className="pr-[2px] pl-[3px]"><Grip /></div>
            <div className="pl-[7px]">
              <Tool name="Extruded boss" icon={<Extrude />} arrow />
              <Tool name="Extruded cut" icon={<CutDim />} arrow dim />
              <ToolSep cls="-ml-[2px] mr-[3px]" />
              <Tool name="Fillet" icon={<FilletDim />} arrow dim />
              <Tool name="Rib" icon={<RibDim />} />
              <Tool name="Shell" icon={<ShellDim />} />
              <Tool name="Draft" icon={<DraftDim />} />
              <Tool name="Hole wizard" icon={<WizardDim />} arrow dim />
              <ToolSep cls="-ml-[2px] mr-[3px]" />
              <Tool name="Linear pattern" icon={<Pattern dim />} arrow dim />
              <ToolSep cls="-ml-[2px] mr-[3px]" />
              <Tool name="Reference geometry" icon={<RefPlane />} arrow />
              <Tool name="Curves" icon={<CurveIc />} arrow />
              <ToolSep cls="-ml-[2px] mr-[3px]" />
              <Tool name="Instant3D" icon={<Instant3D />} />
            </div>
          </div>
          <div className="w-[33px] border-b border-l border-[#8d8d8d] pb-[7px]">
            <div className="pr-[1px] pl-[3px]"><Grip /></div>
            <div className="pl-[7px]">
              {["front", "top", "right", "left", "bottom", "back"].map((f) => <Tool key={f} name={f + " view"} icon={<Cube face={f} />} />)}
              <Tool name="Isometric view" icon={<IsoDim />} />
              <ToolSep cls="-ml-[2px] mr-[2px]" />
              <Tool name="Sketch" icon={<SketchIc />} />
              <Tool name="Repair sketch" icon={<Repair />} />
              <Tool name="Convert entities" icon={<Convert />} />
              <ToolSep cls="-ml-[2px] mr-[2px]" />
              <Tool name="Boss" icon={<Extrude />} />
              <Tool name="Cut" icon={<CutDim blue />} />
            </div>
          </div>
        </div>
        <div className="flex min-w-0 flex-1 flex-col">
          <div className="flex min-h-0 flex-1"><Panel /><Viewport /></div>
          <div className="flex h-[15px] shrink-0">
            <div className="ml-px flex border-t border-[#222] bg-[#b4b4b6]">
              {navPaths.map((d) => (
                <button key={d} aria-label="Scroll tabs" className="h-[14px] w-[16px] border border-[#8a8a8a]"><svg viewBox="0 0 14 14" className="h-[12px] w-[14px]" aria-hidden="true"><path d={d} fill="#8f8f92" stroke="#8f8f92" /></svg></button>
              ))}
            </div>
            <button className="w-[58px] border-t border-[#8a8a8a] pb-[3px] pl-[5px] leading-[12px] font-bold">Model</button>
            <button className="w-[109px] border-x border-t border-[#8a8a8a] bg-[#d4d4d4] pr-[8px] pb-[3px] leading-[12px]">Motion Study 1</button>
            <div className="flex-1 border-t border-r border-[#8a8a8a]" />
          </div>
        </div>
        <div className="flex w-[49px] shrink-0 flex-col">
          <div className="pl-[5px]"><Grip /></div>
          <div className="pl-[10px]">
            <Tool name="Sketch" icon={<SketchIc />} arrow active />
            <Tool name="Smart dimension" icon={<Dim />} arrow />
            <ToolSep cls="-ml-[2px]" />
            <Tool name="Line" icon={<LineIc />} arrow />
            <Tool name="Rectangle" icon={<RectIc />} arrow />
            <Tool name="Slot" icon={<SlotIc />} arrow />
            <Tool name="Circle" icon={<CircleIc />} arrow />
            <Tool name="Arc" icon={<ArcIc />} arrow />
            <Tool name="Spline" icon={<SplineIc />} arrow />
            <Tool name="Ellipse" icon={<EllipseIc />} arrow />
            <Tool name="Sketch fillet" icon={<FilletIc />} arrow />
            <Tool name="Polygon" icon={<PolyIc />} />
            <Tool name="Point" icon={<PointIc />} />
            <Tool name="Plane" icon={<PlaneDim />} />
            <Tool name="Text" icon={<TextIc />} />
            <ToolSep cls="-ml-[2px]" />
            <Tool name="Trim" icon={<TrimIc />} arrow />
            <Tool name="Convert entities" icon={<ConvertCube />} arrow />
            <Tool name="Offset" icon={<OffsetIc />} />
            <Tool name="Mirror" icon={<MirrorIc />} />
            <Tool name="Pattern" icon={<Pattern />} arrow />
            <Tool name="Move" icon={<MoveIc />} arrow />
            <ToolSep cls="-ml-[2px]" />
            <Tool name="Display relations" icon={<RelEye />} arrow />
            <Tool name="Repair sketch" icon={<Repair />} />
            <Tool name="Quick snaps" icon={<QuickDim />} arrow dim />
          </div>
          <button aria-label="More tools" className="mt-auto mb-[9px] ml-[22px]"><Ic cls="h-[9px] w-[8px]" box="0 0 8 9"><path d="M.5.5L4 4 7.500.5M.5 4.500L4 8l3.500-3.500" stroke="#444" strokeWidth="1.300" /></Ic></button>
          <div className="mb-[2px] ml-[4px] h-px shrink-0 bg-[#8d8d8d]" />
        </div>
      </div>
      <footer className="flex h-[20px] shrink-0 items-center border-t border-[#8a8a8a]">
        <span className="flex-1 pl-px">Adds a concentric relation to the selection(s)</span>
        <span className="w-[56px] text-right">0.00mm</span>
        <span className="w-[43px] text-right">0mm</span>
        <span className="h-[17px] w-[106px] border-r border-[#bbb] pl-[19px] leading-[17px] whitespace-nowrap">Under Defined</span>
        <span className="h-[17px] w-[99px] border-r border-[#bbb] pl-[7px] leading-[17px] whitespace-nowrap">Editing Sketch1</span>
        <span className="flex h-[17px] w-[37px] items-center justify-center border-r border-[#bbb]"><Traffic cls="h-[14px] w-[14px]" /></span>
        <span className="flex h-[17px] w-[119px] items-center border-r border-[#bbb] pl-[22px]">MMGS<svg viewBox="0 0 5 3" className="ml-[18px] h-[3px] w-[5px]" aria-hidden="true"><path d="M0 3h5L2.500 0z" fill="#333" /></svg></span>
        <button aria-label="Tags" className="flex w-[49px] justify-end pr-[2px]"><Ic cls="h-[14px] w-[16px]"><path d="M1 6l3-4 13 6v5l-4 4L2 11z" fill="#eee" strokeWidth="1.500" /><path d="M2 6.500l11 6 4-4M13 12.500V17" /><circle cx="6" cy="5.500" r="1.500" fill={K} /></Ic></button>
      </footer>
      <div className="flex h-[2px] shrink-0 border-t border-[#3c5568] bg-[#a9c4dc]"><span className="ml-[122px] w-[53px] bg-white" /><span className="ml-[71px] w-[60px] bg-white" /><span className="ml-[4px] w-[58px] bg-white" /></div>
      <ContextMenu />
    </div>
  );
}
